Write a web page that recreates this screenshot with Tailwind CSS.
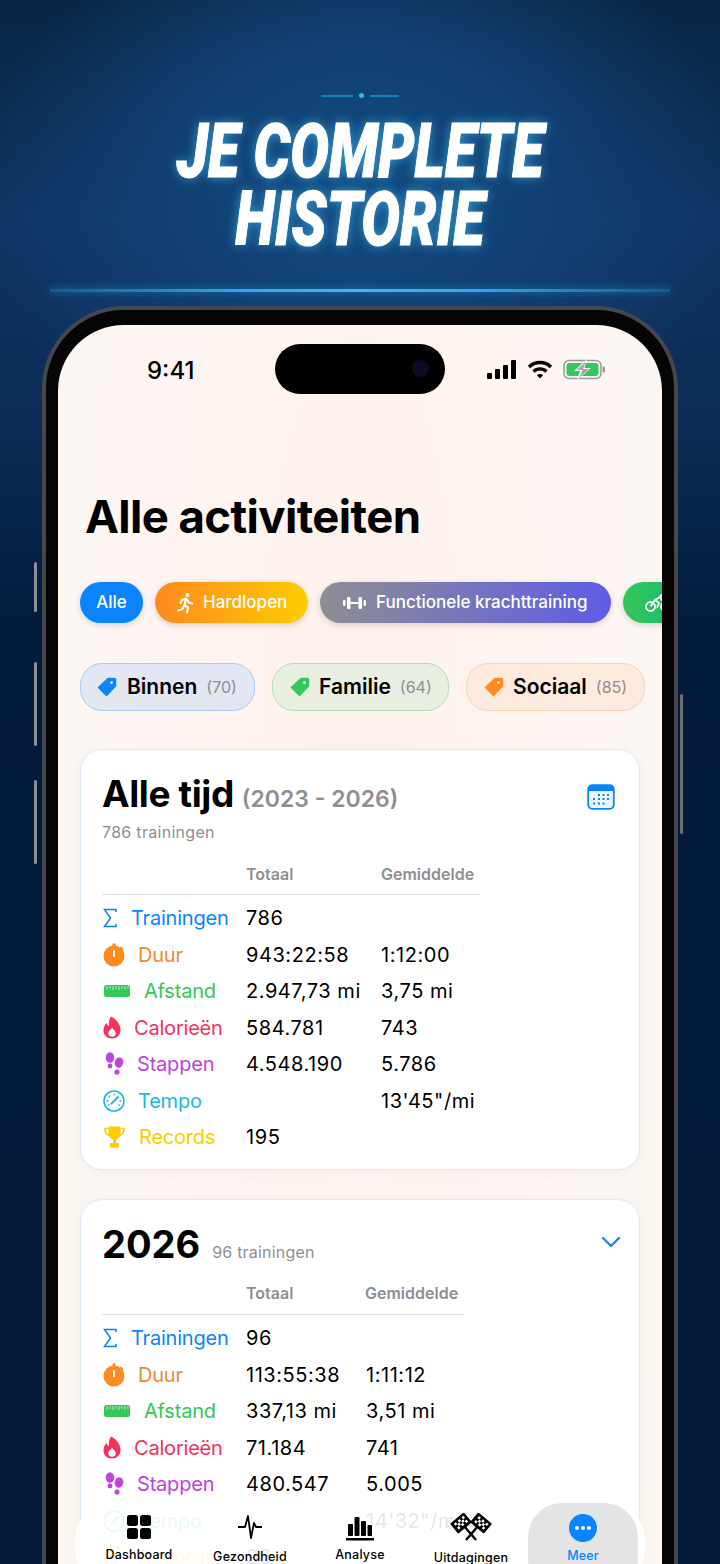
<!DOCTYPE html>
<html lang="nl">
<head>
<meta charset="utf-8">
<script src="https://cdn.jsdelivr.net/npm/@tailwindcss/browser@4"></script>
<title>Je complete historie</title>
</head>
<body class="m-0">
<div class="relative w-[720px] h-[1564px] overflow-hidden bg-[radial-gradient(ellipse_380px_300px_at_50%_190px,#134c80_0%,#103f72_50%,transparent_100%),linear-gradient(180deg,#0a2443_0%,#0f3464_14%,#0d2c58_26%,#041c3c_40%,#031a38_100%)] font-['Inter',sans-serif]">

  <!-- ornament -->
  <div class="flex items-center justify-center gap-[6px] pt-[94px] h-[97px]">
    <div class="w-[32px] h-[2px] bg-[#1a9ad0]/70"></div>
    <div class="w-[5px] h-[5px] rounded-full bg-[#22c6f0]"></div>
    <div class="w-[29px] h-[2px] bg-[#1a9ad0]/70"></div>
  </div>

  <!-- headline -->
  <h1 class="mt-[20px] text-center text-white italic font-black scale-x-[0.76] font-['Roboto',sans-serif] text-[76px] leading-[68px] tracking-[0px] [-webkit-text-stroke:1px_white] [text-shadow:0_0_14px_rgba(70,190,250,0.75)] whitespace-nowrap">JE COMPLETE<br>HISTORIE</h1>

  <!-- light bar -->
  <div class="mt-[36px] mx-[50px] h-[3px] bg-[linear-gradient(90deg,#155c8c,#2aa8e6_30%,#3cbcf2_50%,#2aa8e6_70%,#155c8c)] shadow-[0_0_8px_rgba(40,160,230,0.7)]"></div>

  <!-- phone -->
  <div class="relative mt-[14px] ml-[42px] w-[636px] h-[1400px]">
    <!-- side buttons -->
    <div class="absolute left-[-8px] top-[256px] w-[3px] h-[50px] rounded-sm bg-[#8d8f92]"></div>
    <div class="absolute left-[-8px] top-[356px] w-[3px] h-[84px] rounded-sm bg-[#8d8f92]"></div>
    <div class="absolute left-[-8px] top-[474px] w-[3px] h-[84px] rounded-sm bg-[#8d8f92]"></div>
    <div class="absolute right-[-5px] top-[388px] w-[3px] h-[140px] rounded-sm bg-[#6d6f72]"></div>

    <div class="h-full rounded-[82px] bg-[#050505] border-[4px] border-[#45474a] pt-[15px] px-[12px] pb-[12px]">
      <div class="relative h-full rounded-[66px] overflow-hidden bg-[radial-gradient(ellipse_at_50%_25%,#fff1ec_0%,#fdf6f3_60%,#fbf6f0_100%)]">

        <!-- status bar -->
        <div class="relative h-[90px]">
          <span class="absolute left-[89px] top-[32px] text-[24px] leading-[28px] font-medium text-black">9:41</span>
          <div class="absolute left-[217px] top-[19px] w-[170px] h-[50px] rounded-full bg-black">
            <div class="absolute left-[137px] top-[16px] w-[17px] h-[17px] rounded-full bg-[#0c0c22]"></div>
          </div>
          <svg class="absolute left-[428px] top-[35px]" width="32" height="20" viewBox="0 0 32 20" fill="#000"><rect x="1" y="13" width="5" height="6" rx="1"/><rect x="9" y="9" width="5" height="10" rx="1"/><rect x="17" y="5" width="5" height="14" rx="1"/><rect x="25" y="0" width="5" height="19" rx="1"/></svg>
          <svg class="absolute left-[469px] top-[35px]" width="26" height="20" viewBox="0 0 26 20" fill="none" stroke="#000" stroke-width="3.4"><path d="M2 7 C8 1 18 1 24 7"/><path d="M6.5 11.5 C10 8 16 8 19.500 11.5"/><path d="M13 18.500 L9.800 15.200 C11.500 13.600 14.500 13.600 16.200 15.200 Z" fill="#000" stroke="none"/></svg>
          <svg class="absolute left-[505px] top-[34px]" width="44" height="21" viewBox="0 0 44 21" fill="none"><rect x="1" y="1.500" width="37" height="18" rx="5" stroke="#9a9a9a" stroke-width="1.500"/><rect x="3.500" y="4" width="32" height="13" rx="3" fill="#34c759"/><rect x="39.500" y="7.500" width="2.500" height="6" rx="1" fill="#9a9a9a"/><path d="M24 0 L11 12 H17 L14 21 L28 9 H21.500 Z" fill="#fdf5f2"/><path d="M23 2.500 L13.500 11 H19.300 L16.500 18.500 L25.800 10 H20 Z" fill="#a5a5aa"/></svg>
        </div>

        <!-- title -->
        <h2 class="mt-[74px] ml-[27px] text-[45.5px] leading-[56px] font-bold tracking-[-0.6px] text-black whitespace-nowrap">Alle activiteiten</h2>

        <!-- activity pills -->
        <div class="mt-[37px] ml-[22px] flex gap-[12px] text-white text-[17px] font-medium whitespace-nowrap">
          <div class="shrink-0 h-[41px] w-[63px] rounded-full bg-[#0a84ff] flex items-center justify-center shadow-[0_2px_6px_rgba(0,0,0,0.15)]">Alle</div>
          <div class="shrink-0 h-[41px] w-[153px] rounded-full bg-[linear-gradient(90deg,#ff8a1e,#ffcc00)] flex items-center pl-[22px] gap-[10px] shadow-[0_2px_6px_rgba(0,0,0,0.15)]">
            <svg width="16" height="22" viewBox="0 0 16 22" fill="none" stroke="#fff" stroke-width="2.200" stroke-linecap="round" stroke-linejoin="round"><circle cx="10.500" cy="3" r="2" fill="#fff" stroke="none"/><path d="M5 8 L9 6.500 L12 10.500 L15 11.500"/><path d="M9 7 L7.500 13 L11 15.500 L10 20.500"/><path d="M7 14 L5 17.500 L1 18.500"/><path d="M5 8 L3.500 11"/></svg>
            <span>Hardlopen</span>
          </div>
          <div class="shrink-0 h-[41px] w-[291px] rounded-full bg-[linear-gradient(90deg,#8e8e93,#5e5ce6)] flex items-center pl-[23px] gap-[10px] shadow-[0_2px_6px_rgba(0,0,0,0.15)]">
            <svg width="23" height="14" viewBox="0 0 23 14" fill="#fff"><rect x="0" y="4" width="2.500" height="6" rx="1"/><rect x="4" y="1" width="3.500" height="12" rx="1.200"/><rect x="7.500" y="6" width="8" height="2"/><rect x="15.500" y="1" width="3.500" height="12" rx="1.200"/><rect x="20.500" y="4" width="2.500" height="6" rx="1"/></svg>
            <span>Functionele krachttraining</span>
          </div>
          <div class="shrink-0 h-[41px] w-[120px] rounded-full bg-[linear-gradient(90deg,#34c759,#00a88f)] flex items-center pl-[22px] shadow-[0_2px_6px_rgba(0,0,0,0.15)]">
            <svg width="26" height="18" viewBox="0 0 26 18" fill="none" stroke="#fff" stroke-width="1.800"><circle cx="5.500" cy="12.500" r="4.500"/><circle cx="20.500" cy="12.500" r="4.500"/><path d="M5.500 12.500 L10 6 L14 9 L12 14 M10 6 L15 3 L18 8 H21"/><circle cx="16" cy="1.800" r="1.500" fill="#fff" stroke="none"/></svg>
          </div>
        </div>

        <!-- tag pills -->
        <div class="mt-[40px] ml-[22px] flex text-[21px] font-semibold text-black whitespace-nowrap">
          <div class="shrink-0 w-[175px] h-[48px] rounded-[22px] border border-[#a9cdf0] bg-[#e2e7f2] flex items-center pl-[16px]">
            <svg width="20" height="20" viewBox="0 0 20 20"><path d="M11 1.500 H17.500 A1 1 0 0 1 18.500 2.500 V9 L9.500 18.500 L1.500 10.500 Z" fill="#0a84ff" stroke="#0a84ff" stroke-width="1.500" stroke-linejoin="round"/><circle cx="14.500" cy="5.500" r="1.500" fill="#e2e7f2"/></svg>
            <span class="ml-[10px]">Binnen</span><span class="ml-[9px] text-[16px] font-normal text-[#8e8e93]">(70)</span>
          </div>
          <div class="shrink-0 ml-[17px] w-[177px] h-[48px] rounded-[22px] border border-[#b5dcb9] bg-[#e8efe0] flex items-center pl-[17px]">
            <svg width="20" height="20" viewBox="0 0 20 20"><path d="M11 1.500 H17.500 A1 1 0 0 1 18.500 2.500 V9 L9.500 18.500 L1.500 10.500 Z" fill="#34c759" stroke="#34c759" stroke-width="1.500" stroke-linejoin="round"/><circle cx="14.500" cy="5.500" r="1.500" fill="#e8efe0"/></svg>
            <span class="ml-[9px]">Familie</span><span class="ml-[9px] text-[16px] font-normal text-[#8e8e93]">(64)</span>
          </div>
          <div class="shrink-0 ml-[17px] w-[179px] h-[48px] rounded-[22px] border border-[#f8d3b4] bg-[#fde9dd] flex items-center pl-[17px]">
            <svg width="20" height="20" viewBox="0 0 20 20"><path d="M11 1.500 H17.500 A1 1 0 0 1 18.500 2.500 V9 L9.500 18.500 L1.500 10.500 Z" fill="#ff8a1e" stroke="#ff8a1e" stroke-width="1.500" stroke-linejoin="round"/><circle cx="14.500" cy="5.500" r="1.500" fill="#fde9dd"/></svg>
            <span class="ml-[9px]">Sociaal</span><span class="ml-[9px] text-[16px] font-normal text-[#8e8e93]">(85)</span>
          </div>
        </div>

        <!-- card: all time -->
        <section class="relative mt-[38px] mx-[22px] h-[421px] rounded-[22px] bg-white border border-[#dde9f7] pl-[21px] pt-[21px] shadow-[0_2px_14px_rgba(0,0,0,0.04)]">
          <div class="flex items-baseline gap-[8px] h-[46px]">
            <span class="text-[37px] leading-[46px] font-bold tracking-[-0.4px] text-black">Alle tijd</span>
            <span class="text-[23px] font-semibold text-[#8e8e93]">(2023 - 2026)</span>
          </div>
          <p class="mt-[5px] text-[16px] leading-[20px] tracking-[0.3px] text-[#8e8e93]">786 trainingen</p>
          <svg class="absolute left-[506px] top-[34px]" width="28" height="26" viewBox="0 0 28 26" fill="none"><rect x="1.200" y="1.200" width="25.600" height="23.600" rx="4" fill="#eaf4ff" stroke="#0a84ff" stroke-width="1.800"/><path d="M1.200 7 V5.200 A4 4 0 0 1 5.200 1.200 H22.800 A4 4 0 0 1 26.800 5.200 V7 Z" fill="#0a84ff"/><g fill="#0a84ff"><rect x="11" y="10" width="2" height="2"/><rect x="15.500" y="10" width="2" height="2"/><rect x="20" y="10" width="2" height="2"/><rect x="6" y="14" width="2" height="2"/><rect x="11" y="14" width="2" height="2"/><rect x="15.500" y="14" width="2" height="2"/><rect x="20" y="14" width="2" height="2"/><rect x="6" y="18.500" width="2" height="2"/><rect x="11" y="18.500" width="2" height="2"/><rect x="15.500" y="18.500" width="2" height="2"/></g></svg>

          <div class="mt-[20px] w-[378px] grid grid-cols-[144px_135px_1fr] h-[33px] border-b border-[#e2e2e4] text-[16px] font-semibold text-[#8e8e93]">
            <span></span><span class="leading-[24px]">Totaal</span><span class="leading-[24px]">Gemiddelde</span>
          </div>

          <div class="mt-[5px] w-[400px] grid grid-cols-[144px_135px_1fr] auto-rows-[36.5px] items-center text-[20px] text-black whitespace-nowrap tracking-[0.55px]">
            <div class="flex items-center text-[#0a84ff] tracking-[-0.2px]"><svg class="ml-[1px] mr-[14px]" width="14" height="20" viewBox="0 0 14 20" fill="none" stroke="#0a84ff" stroke-width="1.500"><path d="M13 4 V1.500 H1.500 L7.500 10 L1.500 18.500 H13 V16"/></svg>Trainingen</div><span>786</span><span></span>
            <div class="flex items-center text-[#f28a32] tracking-[-0.2px]"><svg class="ml-[1px] mr-[13px]" width="22" height="24" viewBox="0 0 22 24"><circle cx="11" cy="13" r="10.500" fill="#ff8a1e"/><rect x="9.500" y="0.500" width="3" height="3" fill="#ff8a1e"/><path d="M18 3.500 L20.500 6 L19 7.500 L16.500 5 Z" fill="#ff8a1e"/><rect x="10" y="7" width="2" height="7" rx="1" fill="#fff"/></svg>Duur</div><span>943:22:58</span><span>1:12:00</span>
            <div class="flex items-center text-[#34c759] tracking-[-0.2px]"><svg class="ml-[2px] mr-[14px]" width="26" height="12" viewBox="0 0 26 12"><rect width="26" height="12" rx="2.500" fill="#34c759"/><path d="M3 1 V5 M6 1 V4 M9 1 V5 M12 1 V4 M15 1 V5 M18 1 V4 M21 1 V5 M24 1 V4" stroke="#c6f0d0" stroke-width="0.900"/></svg>Afstand</div><span>2.947,73 mi</span><span>3,75 mi</span>
            <div class="flex items-center text-[#f5315c] tracking-[-0.2px]"><svg class="ml-[1px] mr-[13px]" width="18" height="23" viewBox="0 0 18 23"><path d="M8 0.500 C13 3 17.500 8 17.500 14 C17.500 19.500 13.500 22.500 9 22.500 C4 22.500 0.500 19 0.500 14.500 C0.500 11 2 8.500 3.500 7 C4 8.500 4.800 9.500 6 10 C5.500 7 6 3 8 0.500 Z" fill="#f5315c"/><path d="M9 11.500 C10 13.500 12.800 15 12.800 17.500 C12.800 19.500 11 20.800 9 20.800 C7 20.800 5.200 19.500 5.200 17.500 C5.200 15 8 14 9 11.500 Z" fill="#fff"/></svg>Calorieën</div><span>584.781</span><span>743</span>
            <div class="flex items-center text-[#c042e0] tracking-[-0.2px]"><svg class="ml-[3px] mr-[13px]" width="19" height="24" viewBox="0 0 19 24" fill="#c042e0"><ellipse cx="5" cy="5.500" rx="4.200" ry="5.300"/><circle cx="5" cy="14" r="2.400"/><ellipse cx="14" cy="10.500" rx="4.200" ry="5.300" transform="rotate(15 14 10.500)"/><circle cx="12" cy="20" r="2.600"/></svg>Stappen</div><span>4.548.190</span><span>5.786</span>
            <div class="flex items-center text-[#1ab8e0] tracking-[-0.2px]"><svg class="ml-[1px] mr-[13px]" width="22" height="22" viewBox="0 0 22 22" fill="none" stroke="#1ab8e0"><circle cx="11" cy="11" r="10" stroke-width="1.600"/><path d="M8.500 13.500 L15 7" stroke-width="2" stroke-linecap="round"/><path d="M11 3.500 V5.500 M3.500 11 H5.500 M18.500 11 H16.500 M5.800 5.800 L7 7 M5 15.500 L6.500 14.500 M17 15.500 L15.500 14.500" stroke-width="1.300"/></svg>Tempo</div><span></span><span>13'45"/mi</span>
            <div class="flex items-center text-[#ffcc00] tracking-[-0.2px]"><svg class="ml-[2px] mr-[14px]" width="21" height="22" viewBox="0 0 21 22" fill="#ffcc00"><path d="M4.500 0.500 H16.500 V7 C16.500 11 14 13 12 13.500 V17 H15 V21.500 H6 V17 H9 V13.500 C7 13 4.500 11 4.500 7 Z"/><path d="M4.500 2.500 H1 C1 6.500 2.500 9 6 9.500 M16.500 2.500 H20 C20 6.500 18.500 9 15 9.500" fill="none" stroke="#ffcc00" stroke-width="1.600"/></svg>Records</div><span>195</span><span></span>
          </div>
        </section>

        <!-- card: 2026 -->
        <section class="relative mt-[29px] mx-[22px] h-[500px] rounded-[22px] bg-white border border-[#dde9f7] pl-[21px] pt-[21px] shadow-[0_2px_14px_rgba(0,0,0,0.04)]">
          <div class="flex items-baseline gap-[12px] h-[46px]">
            <span class="text-[38px] leading-[46px] font-bold text-black">2026</span>
            <span class="text-[16px] tracking-[0.2px] text-[#8e8e93]">96 trainingen</span>
          </div>
          <svg class="absolute left-[520px] top-[36px]" width="20" height="12" viewBox="0 0 20 12" fill="none" stroke="#0a84ff" stroke-width="2.200" stroke-linecap="round" stroke-linejoin="round"><path d="M2 2 L10 10 L18 2"/></svg>

          <div class="mt-[14px] w-[362px] grid grid-cols-[144px_119px_1fr] h-[34px] border-b border-[#e2e2e4] text-[16px] font-semibold text-[#8e8e93]">
            <span></span><span class="leading-[24px]">Totaal</span><span class="leading-[24px]">Gemiddelde</span>
          </div>

          <div class="mt-[5px] w-[400px] grid grid-cols-[144px_120px_1fr] auto-rows-[36.5px] items-center text-[20px] text-black whitespace-nowrap tracking-[0.55px]">
            <div class="flex items-center text-[#0a84ff] tracking-[-0.2px]"><svg class="ml-[1px] mr-[14px]" width="14" height="20" viewBox="0 0 14 20" fill="none" stroke="#0a84ff" stroke-width="1.500"><path d="M13 4 V1.500 H1.500 L7.500 10 L1.500 18.500 H13 V16"/></svg>Trainingen</div><span>96</span><span></span>
            <div class="flex items-center text-[#f28a32] tracking-[-0.2px]"><svg class="ml-[1px] mr-[13px]" width="22" height="24" viewBox="0 0 22 24"><circle cx="11" cy="13" r="10.500" fill="#ff8a1e"/><rect x="9.500" y="0.500" width="3" height="3" fill="#ff8a1e"/><path d="M18 3.500 L20.500 6 L19 7.500 L16.500 5 Z" fill="#ff8a1e"/><rect x="10" y="7" width="2" height="7" rx="1" fill="#fff"/></svg>Duur</div><span>113:55:38</span><span>1:11:12</span>
            <div class="flex items-center text-[#34c759] tracking-[-0.2px]"><svg class="ml-[2px] mr-[14px]" width="26" height="12" viewBox="0 0 26 12"><rect width="26" height="12" rx="2.500" fill="#34c759"/><path d="M3 1 V5 M6 1 V4 M9 1 V5 M12 1 V4 M15 1 V5 M18 1 V4 M21 1 V5 M24 1 V4" stroke="#c6f0d0" stroke-width="0.900"/></svg>Afstand</div><span>337,13 mi</span><span>3,51 mi</span>
            <div class="flex items-center text-[#f5315c] tracking-[-0.2px]"><svg class="ml-[1px] mr-[13px]" width="18" height="23" viewBox="0 0 18 23"><path d="M8 0.500 C13 3 17.500 8 17.500 14 C17.500 19.500 13.500 22.500 9 22.500 C4 22.500 0.500 19 0.500 14.500 C0.500 11 2 8.500 3.500 7 C4 8.500 4.800 9.500 6 10 C5.500 7 6 3 8 0.500 Z" fill="#f5315c"/><path d="M9 11.500 C10 13.500 12.800 15 12.800 17.500 C12.800 19.500 11 20.800 9 20.800 C7 20.800 5.200 19.500 5.200 17.500 C5.200 15 8 14 9 11.500 Z" fill="#fff"/></svg>Calorieën</div><span>71.184</span><span>741</span>
            <div class="flex items-center text-[#c042e0] tracking-[-0.2px]"><svg class="ml-[3px] mr-[13px]" width="19" height="24" viewBox="0 0 19 24" fill="#c042e0"><ellipse cx="5" cy="5.500" rx="4.200" ry="5.300"/><circle cx="5" cy="14" r="2.400"/><ellipse cx="14" cy="10.500" rx="4.200" ry="5.300" transform="rotate(15 14 10.500)"/><circle cx="12" cy="20" r="2.600"/></svg>Stappen</div><span>480.547</span><span>5.005</span>
            <div class="flex items-center text-[#1ab8e0] tracking-[-0.2px]"><svg class="ml-[1px] mr-[13px]" width="22" height="22" viewBox="0 0 22 22" fill="none" stroke="#1ab8e0"><circle cx="11" cy="11" r="10" stroke-width="1.600"/><path d="M8.500 13.500 L15 7" stroke-width="2" stroke-linecap="round"/></svg>Tempo</div><span></span><span>14'32"/mi</span>
            <div class="flex items-center text-[#ffcc00] tracking-[-0.2px]"><svg class="ml-[2px] mr-[14px]" width="21" height="22" viewBox="0 0 21 22" fill="#ffcc00"><path d="M4.500 0.500 H16.500 V7 C16.500 11 14 13 12 13.500 V17 H15 V21.500 H6 V17 H9 V13.500 C7 13 4.500 11 4.500 7 Z"/></svg>Records</div><span>96</span><span></span>
          </div>
        </section>

        <!-- tab bar -->
        <nav class="absolute left-[17px] top-[1171px] w-[570px] h-[100px] rounded-[46px] bg-white/90 border border-white text-black text-[12.500px] font-medium tracking-[0.2px] whitespace-nowrap">
          <div class="absolute left-[452px] top-[6px] w-[110px] h-[90px] rounded-[34px] bg-[#e4e4e6]"></div>
          <div class="absolute left-[3px] top-[17px] w-[120px] flex flex-col items-center">
            <svg width="26" height="26" viewBox="0 0 26 26" fill="#000"><rect x="1" y="1" width="11" height="11" rx="2.500"/><rect x="14" y="1" width="11" height="11" rx="2.500"/><rect x="1" y="14" width="11" height="11" rx="2.500"/><rect x="14" y="14" width="11" height="11" rx="2.500"/></svg>
            <span class="mt-[6px]">Dashboard</span>
          </div>
          <div class="absolute left-[114px] top-[16px] w-[120px] flex flex-col items-center">
            <svg width="26" height="28" viewBox="0 0 26 28" fill="none" stroke="#000" stroke-width="1.800" stroke-linejoin="round"><path d="M1 14 H8 L11 3 L14 25 L17 10 L19 14 H25"/></svg>
            <span class="mt-[7px]">Gezondheid</span>
          </div>
          <div class="absolute left-[224px] top-[18px] w-[120px] flex flex-col items-center">
            <svg width="28" height="26" viewBox="0 0 28 26" fill="#000"><rect x="2" y="9" width="5" height="12" rx="1"/><rect x="8.500" y="2" width="5" height="19" rx="1"/><rect x="15" y="6" width="5" height="15" rx="1"/><rect x="21.500" y="10" width="4.500" height="11" rx="1"/><rect x="0" y="23" width="28" height="2.500"/></svg>
            <span class="mt-[5px]">Analyse</span>
          </div>
          <div class="absolute left-[335px] top-[16px] w-[120px] flex flex-col items-center">
            <svg width="44" height="28" viewBox="0 0 44 28">
              <path d="M15 13 L27 27 M29 13 L17 27" stroke="#000" stroke-width="2.400" fill="none"/>
              <g transform="translate(12 10) rotate(-40)"><rect x="-9" y="-6.500" width="18" height="13" rx="1" fill="#000"/><path d="M-6 -4 h2.500 v2.500 h-2.500 z M-1 -4 h2.500 v2.500 h-2.500 z M4 -4 h2.500 v2.500 h-2.500 z M-3.500 -1.500 h2.500 v2.500 h-2.500 z M1.500 -1.500 h2.500 v2.500 h-2.500 z M-6 1 h2.500 v2.500 h-2.500 z M-1 1 h2.500 v2.500 h-2.500 z M4 1 h2.500 v2.500 h-2.500 z" fill="#fff"/></g>
              <g transform="translate(32 10) rotate(40)"><rect x="-9" y="-6.500" width="18" height="13" rx="1" fill="#000"/><path d="M-6 -4 h2.500 v2.500 h-2.500 z M-1 -4 h2.500 v2.500 h-2.500 z M4 -4 h2.500 v2.500 h-2.500 z M-3.500 -1.500 h2.500 v2.500 h-2.500 z M1.500 -1.500 h2.500 v2.500 h-2.500 z M-6 1 h2.500 v2.500 h-2.500 z M-1 1 h2.500 v2.500 h-2.500 z M4 1 h2.500 v2.500 h-2.500 z" fill="#fff"/></g>
            </svg>
            <span class="mt-[8px]">Uitdagingen</span>
          </div>
          <div class="absolute left-[447px] top-[17px] w-[120px] flex flex-col items-center text-[#0a84ff]">
            <svg width="28" height="28" viewBox="0 0 28 28"><circle cx="14" cy="14" r="14" fill="#0a84ff"/><circle cx="8" cy="14" r="2" fill="#fff"/><circle cx="14" cy="14" r="2" fill="#fff"/><circle cx="20" cy="14" r="2" fill="#fff"/></svg>
            <span class="mt-[5px]">Meer</span>
          </div>
        </nav>
      </div>
    </div>
  </div>
</div>
</body>
</html>
